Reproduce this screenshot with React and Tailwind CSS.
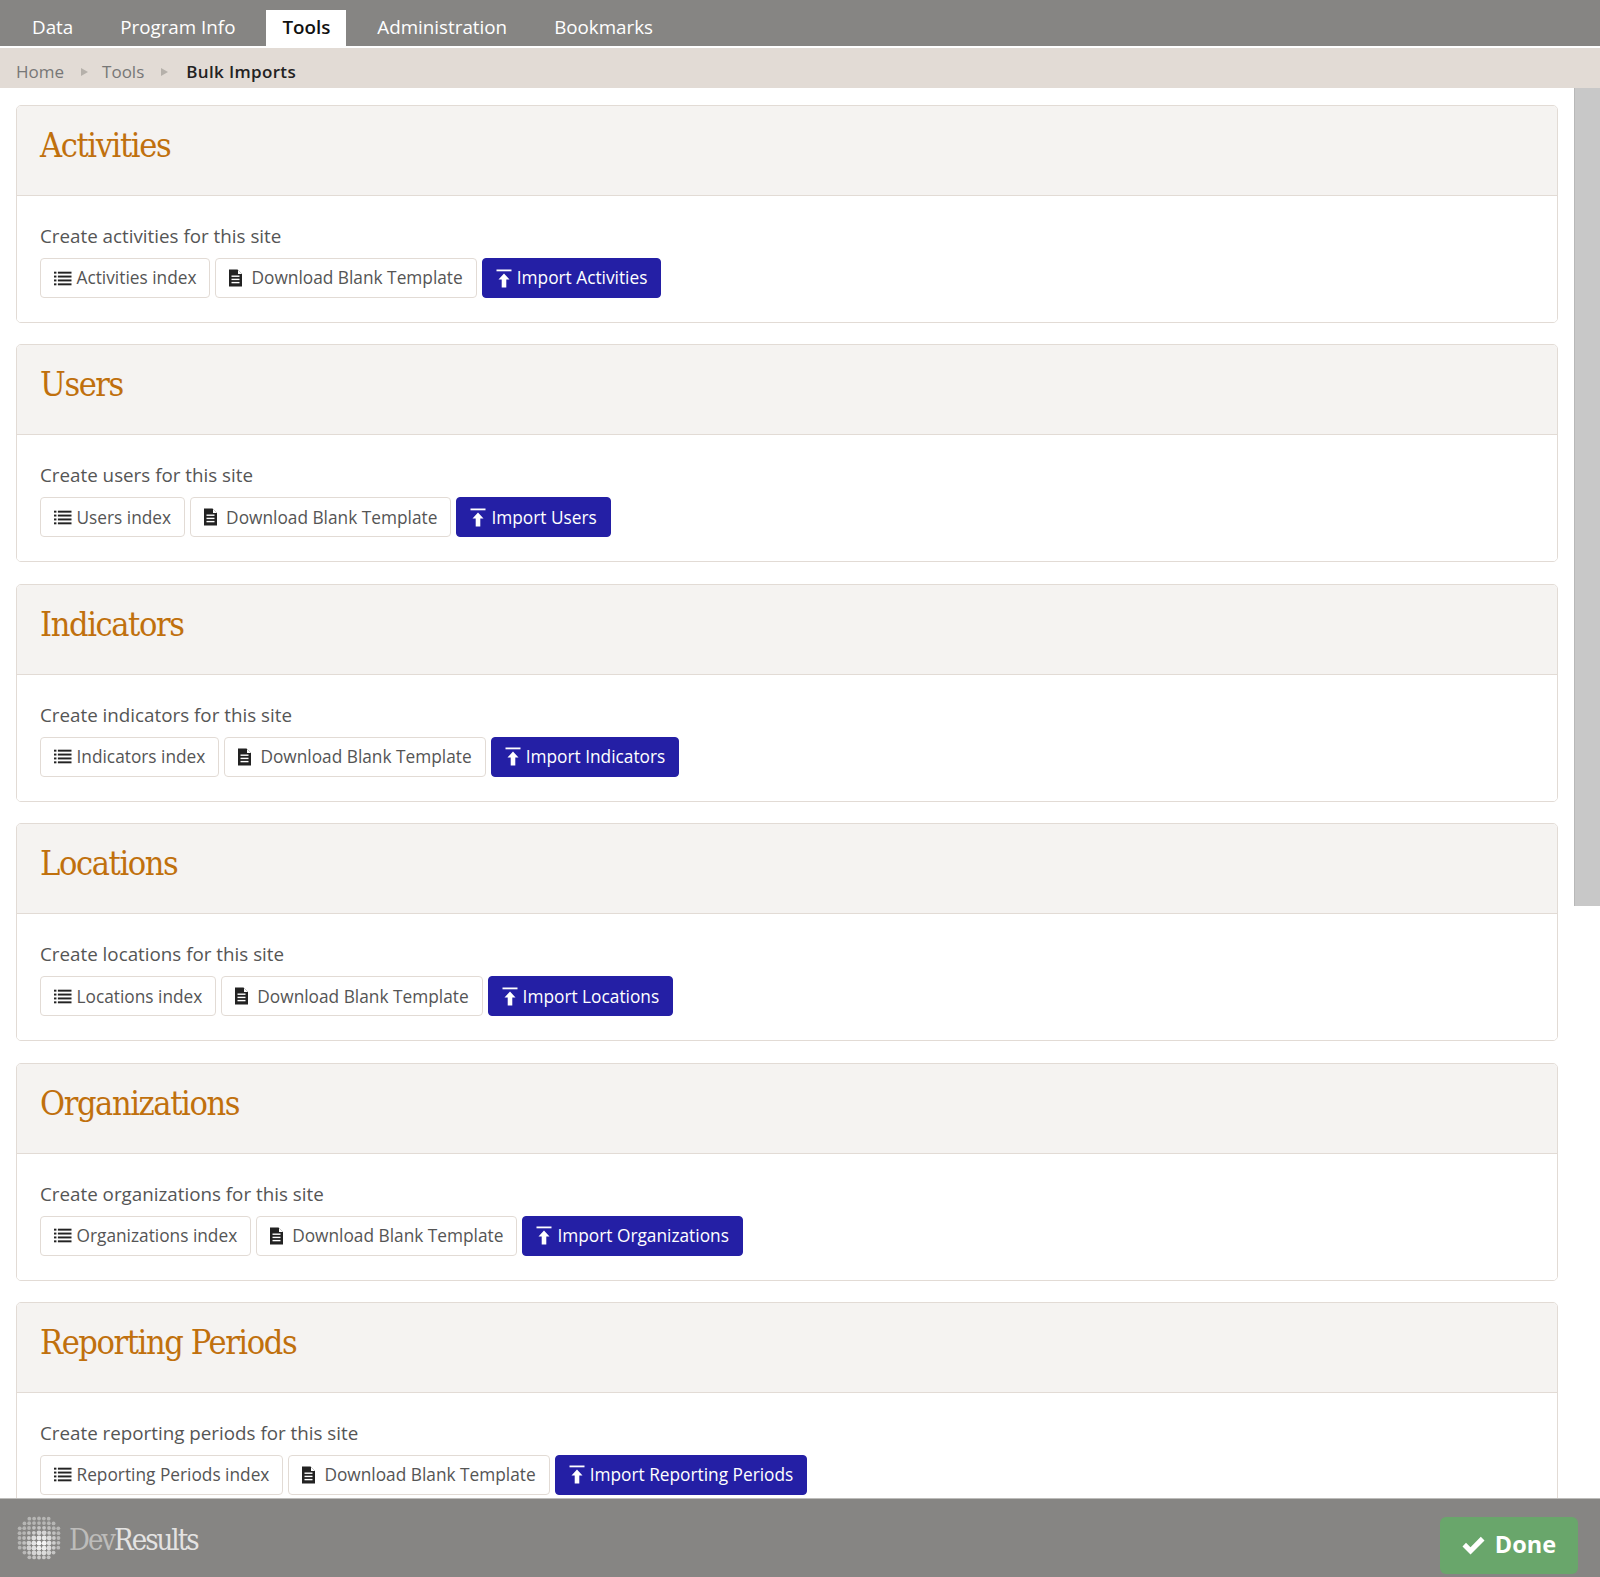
import React from 'react';

const sections = [
    { title: 'Activities', noun: 'activities', index: 'Activities index', action: 'Import Activities' },
    { title: 'Users', noun: 'users', index: 'Users index', action: 'Import Users' },
    { title: 'Indicators', noun: 'indicators', index: 'Indicators index', action: 'Import Indicators' },
    { title: 'Locations', noun: 'locations', index: 'Locations index', action: 'Import Locations' },
    { title: 'Organizations', noun: 'organizations', index: 'Organizations index', action: 'Import Organizations' },
    { title: 'Reporting Periods', noun: 'reporting periods', index: 'Reporting Periods index', action: 'Import Reporting Periods' },
];

const tabs = ['Data', 'Program Info', 'Tools', 'Administration', 'Bookmarks'];

const ListIcon = () => (
    <svg width="17.5" height="15" viewBox="0 0 18 15" fill="#222" className="mr-[-1px] shrink-0">
        <rect x="0" y="0.5" width="2.5" height="2" />
        <rect x="4" y="0.5" width="14" height="2" />
        <rect x="0" y="4.5" width="2.5" height="2" />
        <rect x="4" y="4.5" width="14" height="2" />
        <rect x="0" y="8.5" width="2.5" height="2" />
        <rect x="4" y="8.5" width="14" height="2" />
        <rect x="0" y="12.5" width="2.5" height="2" />
        <rect x="4" y="12.5" width="14" height="2" />
    </svg>
);

const FileIcon = () => (
    <svg width="14" height="18" viewBox="0 0 14 18" className="mr-[2px] shrink-0">
        <path d="M0 0.5H8.5L13 5V17.5H0Z" fill="#222" />
        <path d="M9 1L13 5H9Z" fill="#fff" />
        <rect x="2.5" y="6.5" width="8" height="1.4" fill="#fff" />
        <rect x="2.5" y="9.7" width="8" height="1.4" fill="#fff" />
        <rect x="2.5" y="12.9" width="8" height="1.4" fill="#fff" />
    </svg>
);

const UploadIcon = () => (
    <svg width="16" height="19" viewBox="0 0 16 19" fill="#fff" className="mr-[-1px] shrink-0">
        <rect x="0.5" y="0.5" width="15" height="1.8" />
        <path d="M8 4.5L13.5 10.5H10.3V18.5H5.7V10.5H2.5Z" />
    </svg>
);

const CheckIcon = () => (
    <svg width="23" height="19" viewBox="0 0 23 19" fill="#fff" className="shrink-0">
        <path d="M0.5 10.5L4 6.8L8.5 11.2L18.8 0.8L22.5 4.5L8.5 18.5Z" />
    </svg>
);

// dotted globe from the footer logo
const Globe = () => {
    const dots = [];
    for (let row = -4; row <= 4; row++) {
        for (let col = -4; col <= 4; col++) {
            const d = Math.hypot(col, row);
            if (d > 4.7) continue;
            // dots bunch up toward the rim, like a sphere
            const squeeze = 1 - d * 0.02;
            const x = 22 + col * 5.3 * squeeze;
            const y = 22 + row * 5.3 * squeeze;
            const glow = Math.hypot(col - 0.4, row - 1.2);
            const opacity = Math.max(0.4, 1 - glow * 0.15);
            dots.push(
                <circle key={`${row}-${col}`} cx={x} cy={y} r={glow < 2.6 ? 2.4 : 1.9} fill="#fff" opacity={opacity} />
            );
        }
    }
    return (
        <svg width="44" height="44" viewBox="0 0 44 44" className="shrink-0">
            {dots}
        </svg>
    );
};

const Button = ({ icon, children, primary }) => (
    <a
        className={`flex h-10 items-center gap-[6px] rounded-[4px] border px-[13px] text-[17.3px] leading-none ${
            primary ? 'border-[#241fa5] bg-[#241fa5] text-white' : 'border-[#e2dbd5] bg-white text-[#555]'
        }`}
    >
        {icon}
        {children}
    </a>
);

const Card = ({ section }) => (
    <section className="mb-[21.4px] overflow-hidden rounded-[5px] border border-[#e2dbd5]">
        <header className="flex h-[90px] border-b border-[#e2dbd5] bg-[#f5f3f1] px-[23px] pt-[17px]">
            <h2 className="font-['DejaVu_Serif_Condensed','DejaVu_Serif',serif] text-[34px] leading-[44px] tracking-[-1.4px] text-[#c0700d]">
                {section.title}
            </h2>
        </header>
        <div className="h-[126px] bg-white px-[23px] pt-[27px]">
            <p className="text-[18.8px] leading-[26px] text-[#555]">Create {section.noun} for this site</p>
            <div className="mt-[9px] flex gap-[5px]">
                <Button icon={<ListIcon />}>{section.index}</Button>
                <Button icon={<FileIcon />}>Download Blank Template</Button>
                <Button icon={<UploadIcon />} primary>
                    {section.action}
                </Button>
            </div>
        </div>
    </section>
);

const App = () => {
    return (
        <main className="flex h-screen w-screen flex-col overflow-hidden bg-white font-['Open_Sans',sans-serif]">
            <nav className="flex h-[46px] shrink-0 items-end gap-[15px] bg-[#868583] pl-4">
                {tabs.map((tab) => (
                    <a
                        key={tab}
                        className={`flex h-9 items-center px-4 pb-[1px] text-[18.8px] leading-none ${
                            tab === 'Tools' ? 'bg-white font-semibold text-[#111]' : 'text-white'
                        }`}
                    >
                        {tab}
                    </a>
                ))}
            </nav>
            <div className="mt-[2px] flex h-10 shrink-0 items-center bg-[#e2dbd5] pl-4 pt-[8px] text-[17px]">
                <span className="text-[#777]">Home</span>
                <span className="ml-[17px] mr-[14px] h-0 w-0 border-y-[4px] border-l-[7px] border-y-transparent border-l-[#b5b0aa]" />
                <span className="text-[#777]">Tools</span>
                <span className="ml-[17px] mr-[14px] h-0 w-0 border-y-[4px] border-l-[7px] border-y-transparent border-l-[#b5b0aa]" />
                <span className="ml-[4px] font-semibold tracking-[0.35px] text-[#222]">Bulk Imports</span>
            </div>
            <div className="flex min-h-0 flex-1">
                <div className="min-w-0 flex-1 overflow-hidden pl-4 pr-4 pt-[17px]">
                    {sections.map((section) => (
                        <Card key={section.title} section={section} />
                    ))}
                </div>
                <div className="w-[26px] shrink-0 bg-white">
                    <div className="h-[818px] border-l border-[#b8b8b8] bg-[#c8c8c8]" />
                </div>
            </div>
            <footer className="flex h-[79px] shrink-0 items-center justify-between border-t border-[#bdbcba] bg-[#868583] pl-[17px] pr-[22px]">
                <div className="flex items-center gap-[8px]">
                    <Globe />
                    <span className="pt-[4px] font-['DejaVu_Serif_Condensed','DejaVu_Serif',serif] text-[29px] leading-none tracking-[-2px] text-[#e4e3e2]">
                        <span className="text-[#bdbcba]">Dev</span>Results
                    </span>
                </div>
                <button className="mt-[14px] flex h-[57px] w-[138px] items-center justify-center gap-[10px] rounded-[6px] bg-[#69a66b] text-[23.5px] font-bold text-white">
                    <CheckIcon />
                    Done
                </button>
            </footer>
        </main>
    );
};

export default App;
